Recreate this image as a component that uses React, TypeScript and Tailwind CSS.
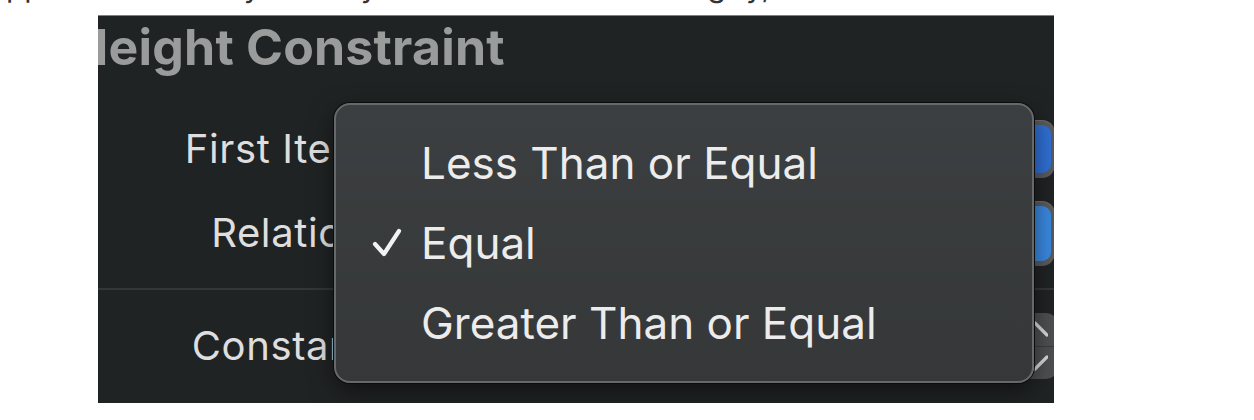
import React from "react";

const font = { fontFamily: "Inter, 'Noto Sans', sans-serif" };

function Check() {
  return (
    <svg width="30" height="30" viewBox="0 0 30 30" className="block">
      <polyline points="3,16 12,26 27,3" fill="none" stroke="#f2f2f2" strokeWidth="4.2" strokeLinecap="round" strokeLinejoin="round" />
    </svg>
  );
}

function PopupButton({ h, blue }: { h: string; blue: string }) {
  return (
    <div className={`flex ${h} w-[300px] justify-end rounded-[13px] bg-[#595b5c] p-[5px] pr-[4px] pl-0 shadow-[inset_0_1px_0_rgba(255,255,255,0.12)]`}>
      <div className={`h-full w-[46px] rounded-[9px] ${blue}`} />
    </div>
  );
}

function Stepper() {
  return (
    <div className="flex h-[66px] w-[46px] flex-col overflow-hidden rounded-[12px] bg-[#4d4f50]">
      <div className="flex flex-1 items-center justify-center border-b border-[#3a3c3d]">
        <svg width="26" height="16" viewBox="0 0 26 16">
          <polyline points="1,14 13,2 25,14" fill="none" stroke="#d9d9d9" strokeWidth="3.2" strokeLinecap="round" strokeLinejoin="round" />
        </svg>
      </div>
      <div className="flex flex-1 items-center justify-center">
        <svg width="26" height="16" viewBox="0 0 26 16">
          <polyline points="1,2 13,14 25,2" fill="none" stroke="#d9d9d9" strokeWidth="3.2" strokeLinecap="round" strokeLinejoin="round" />
        </svg>
      </div>
    </div>
  );
}

export default function App() {
  const items = [
    { label: "Less Than or Equal", checked: false },
    { label: "Equal", checked: true },
    { label: "Greater Than or Equal", checked: false },
  ];
  return (
    <div className="h-[420px] w-[1254px] overflow-hidden bg-white" style={font}>
      {/* cut-off line of text above the panel */}
      <div className="h-[15px] overflow-hidden">
        <div className="mt-[-29px] flex whitespace-pre text-[30px] leading-none text-[#333]">
          <span className="ml-[6px]">pp</span>
          <span className="ml-[201px]">y</span>
          <span className="ml-[100px]">y</span>
          <span className="ml-[330px]">g</span>
          <span className="ml-[20px]">y,</span>
        </div>
      </div>

      {/* inspector panel */}
      <div className="relative ml-[98px] h-[388px] w-[956px] overflow-hidden border-t border-[#7d7f80] bg-[#202324]">
        <div className="h-[92px] pt-[6px]">
          <div className="ml-[-27px] whitespace-nowrap text-[50px] font-bold leading-none tracking-[0.2px] text-[#9a9b9b]">
            Height Constraint
          </div>
        </div>

        <div className="flex h-[82px] items-center">
          <div className="w-[269px] shrink-0 whitespace-nowrap text-right text-[40px] leading-none tracking-[0.6px] text-[#dedede]">First Item</div>
          <div className="ml-auto mr-[-1px]">
            <PopupButton h="h-[58px]" blue="bg-[#2f6fd3]" />
          </div>
        </div>

        <div className="flex h-[86px] items-center">
          <div className="w-[269px] shrink-0 whitespace-nowrap text-right text-[40px] leading-none tracking-[0.6px] text-[#dedede]">Relation</div>
          <div className="ml-auto mr-[-1px]">
            <PopupButton h="h-[65px]" blue="bg-[#3a88df]" />
          </div>
        </div>

        <div className="h-[12px]" />
        <div className="h-[2px] bg-[#34373a]" />

        <div className="flex h-[112px] items-center">
          <div className="w-[269px] shrink-0 whitespace-nowrap text-right text-[40px] leading-none tracking-[0.6px] text-[#dedede]">Constant</div>
          <div className="ml-auto mr-[-4px]">
            <Stepper />
          </div>
        </div>

        {/* open popup menu */}
        <div className="absolute left-[236px] top-[87px] h-[280px] w-[700px] rounded-[16px] border-2 border-[#66696b] bg-gradient-to-b from-[#3c3f41] to-[#353738] py-[18px] shadow-[0_0_0_1px_#0b0c0c,0_8px_24px_rgba(0,0,0,0.5)]">
          {items.map((it) => (
            <div key={it.label} className="flex h-[80px] items-center">
              <div className="flex w-[85px] shrink-0 justify-end pr-[19px]">
                {it.checked ? <Check /> : null}
              </div>
              <div className="whitespace-nowrap text-[44px] leading-none text-[#ececec]">{it.label}</div>
            </div>
          ))}
        </div>
      </div>
    </div>
  );
}
